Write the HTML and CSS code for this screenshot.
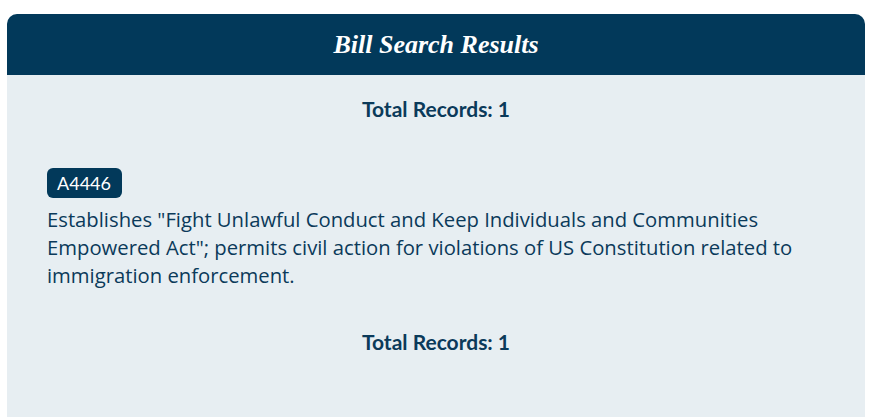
FILE: index.html
```html
<!DOCTYPE html>
<html lang="en">
<head>
<meta charset="utf-8">
<title>Bill Search Results</title>
<link rel="stylesheet" href="styles.css">
</head>
<body>
<section class="card">
  <header class="card-header">
    <h1 class="card-title">Bill Search Results</h1>
  </header>
  <div class="card-body">
    <p class="total">Total Records: 1</p>
    <article class="result">
      <span class="bill-badge">A4446</span>
      <p class="bill-desc">Establishes "Fight Unlawful Conduct and Keep Individuals and Communities Empowered Act"; permits civil action for violations of US Constitution related to immigration enforcement.</p>
    </article>
    <p class="total">Total Records: 1</p>
  </div>
</section>
</body>
</html>
```
FILE: styles.css
```css
html, body {
  margin: 0;
  padding: 0;
  background: #ffffff;
}
body {
  padding: 14px 27px 0 7px;
  font-family: "Lato", "Liberation Sans", sans-serif;
  color: #0b3a5a;
}
.card {
  background: #e7eef2;
  border-radius: 10px 10px 0 0;
  min-height: 420px;
}
.card-header {
  background: #02395a;
  border-radius: 10px 10px 0 0;
  height: 61px;
  display: flex;
  align-items: center;
  justify-content: center;
}
.card-title {
  margin: 0;
  color: #ffffff;
  font-family: "Liberation Serif", serif;
  font-style: italic;
  font-weight: bold;
  font-size: 26px;
}
.card-body {
  padding: 20px 40px 0 40px;
}
.total {
  margin: 0;
  text-align: center;
  font-weight: bold;
  font-size: 21px;
  line-height: 28px;
}
.result {
  margin: 45px 0 39px;
  display: flex;
  flex-direction: column;
  align-items: flex-start;
}
.bill-badge {
  background: #02395a;
  color: #ffffff;
  border-radius: 6px;
  font-size: 18px;
  line-height: 30px;
  padding: 0 11px 0 10px;
  margin-bottom: 7px;
}
.bill-desc {
  margin: 0;
  font-family: "Open Sans", "Liberation Sans", sans-serif;
  font-size: 20.25px;
  line-height: 28px;
}
```
